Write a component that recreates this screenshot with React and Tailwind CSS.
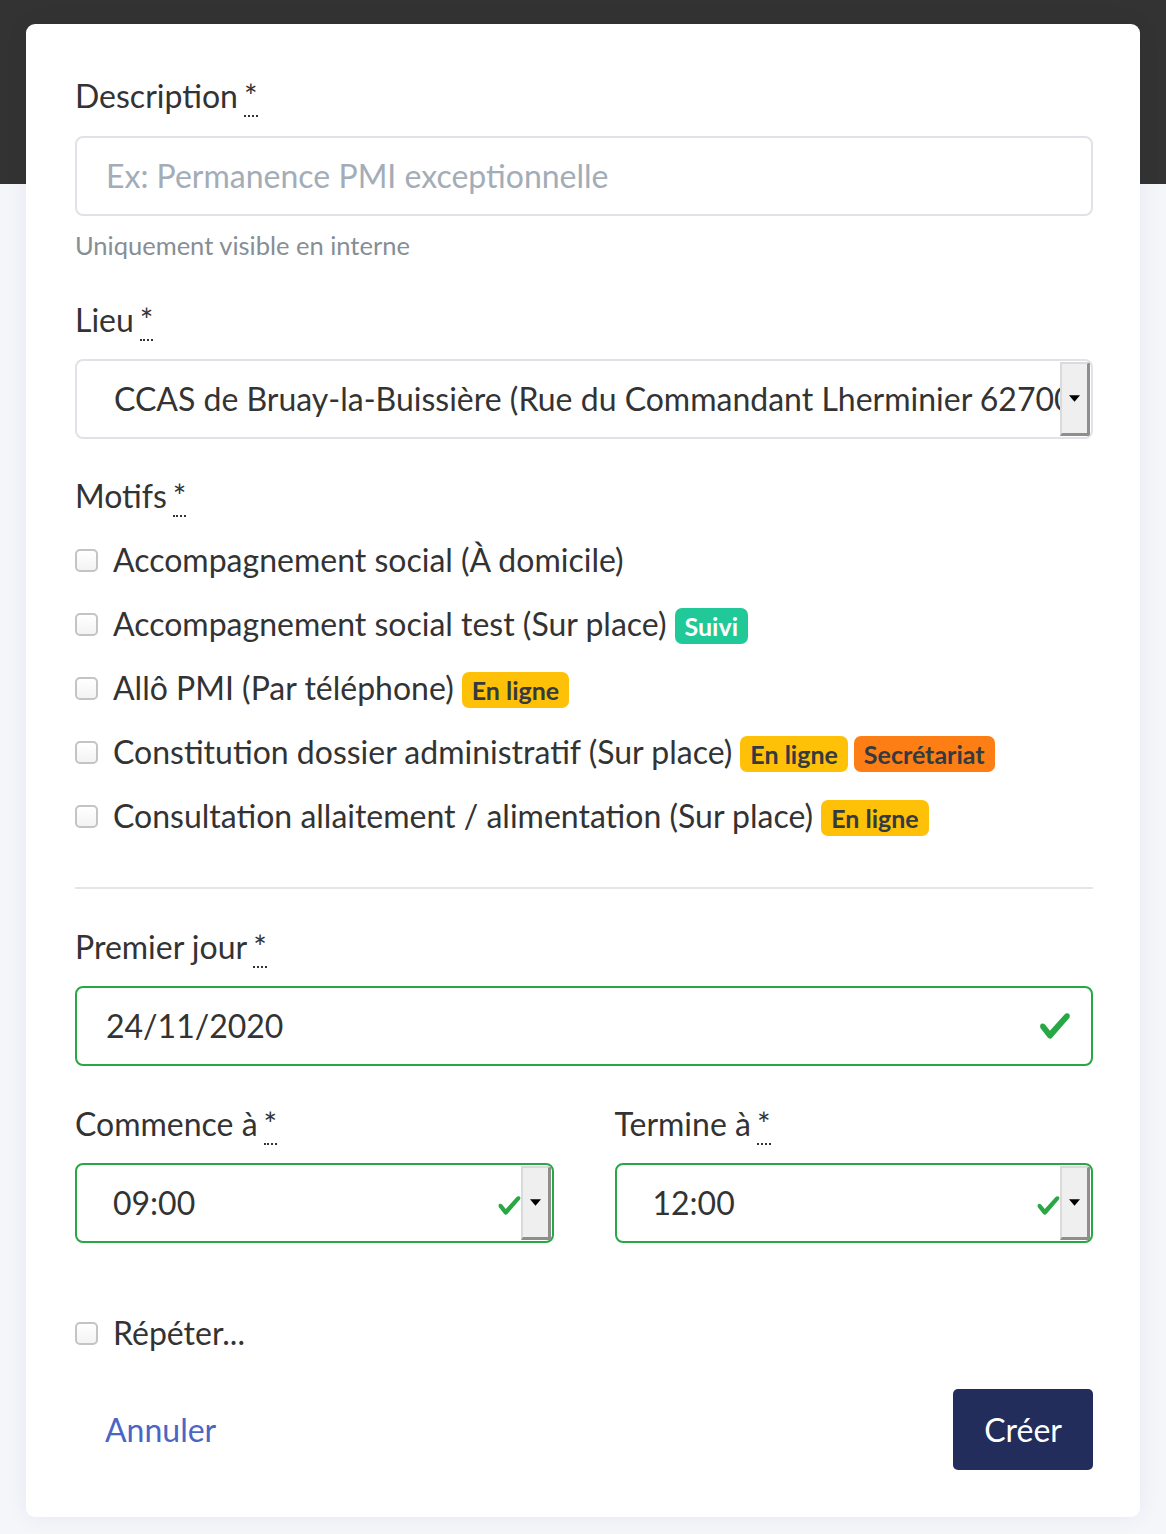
import React from 'react';

const Required = () => (
    <abbr className="ml-[6px] no-underline border-b-2 border-dotted border-[#333] leading-none" title="obligatoire">*</abbr>
);

const Label = ({ children, className = '' }) => (
    <label className={`block text-[32px] leading-[36px] text-[#333] ${className}`}>
        {children}
        <Required />
    </label>
);

const Check = ({ className = '' }) => (
    <svg viewBox="0 0 8 8" className={className}>
        <path fill="#28a745" d="M2.3 6.73L.6 4.53c-.4-1.04.46-1.4 1.1-.8l1.1 1.4 3.4-3.8c.6-.63 1.6-.27 1.2.7l-4 4.6c-.43.5-.8.4-1.1.1z" />
    </svg>
);

const Spinner = () => (
    <div className="h-full w-[30px] bg-[#efefef] border-l-2 border-t-2 border-l-[#dadada] border-t-[#dadada] border-r-[3px] border-b-[3px] border-r-[#8e8e8e] border-b-[#8e8e8e] flex items-center justify-center">
        <svg viewBox="0 0 10 6" className="w-[11px] h-[7px]">
            <path d="M0 0h10L5 6z" fill="#000" />
        </svg>
    </div>
);

const Checkbox = () => (
    <span className="w-[23px] h-[23px] shrink-0 rounded-[5px] border-2 border-[#c4c4c4] bg-gradient-to-b from-white to-[#f3f3f3]"></span>
);

const badgeStyles = {
    suivi: 'bg-[#20c997] text-white',
    ligne: 'bg-[#ffc107] text-[#343a40]',
    secretariat: 'bg-[#fd7e14] text-[#343a40]',
};

const Badge = ({ kind, children }) => (
    <span className={`inline-flex items-center h-[36px] px-[10px] rounded-[7px] text-[25px] font-bold leading-none ${badgeStyles[kind]}`}>
        {children}
    </span>
);

const motifs = [
    { label: 'Accompagnement social (À domicile)', badges: [] },
    { label: 'Accompagnement social test (Sur place)', badges: [['suivi', 'Suivi']] },
    { label: 'Allô PMI (Par téléphone)', badges: [['ligne', 'En ligne']] },
    { label: 'Constitution dossier administratif (Sur place)', badges: [['ligne', 'En ligne'], ['secretariat', 'Secrétariat']] },
    { label: 'Consultation allaitement / alimentation (Sur place)', badges: [['ligne', 'En ligne']] },
];

const TimeInput = ({ value }) => (
    <div className="h-[80px] rounded-[8px] border-2 border-[#28a745] flex items-center pl-[36px] pr-[1px] overflow-hidden">
        <span className="flex-1 text-[32px] text-[#333]">{value}</span>
        <Check className="w-[25px] h-[25px] -mr-[1px] relative top-[2px]" />
        <div className="h-[76px] py-[1px]"><Spinner /></div>
    </div>
);

export default function App() {
    return (
        <div
            className="min-h-[1534px] bg-[linear-gradient(#333_184px,#f4f6fa_184px)] px-[26px] pt-[24px] pb-[18px]"
            style={{ fontFamily: 'Lato, "Open Sans", sans-serif' }}
        >
            <div className="bg-white rounded-[9px] shadow-[0_0_24px_rgba(30,40,80,0.06)] pl-[49px] pr-[47px] pt-[54px] pb-[47px]">
                <Label className="mb-[22px]">Description</Label>
                <div className="h-[80px] rounded-[8px] border-2 border-[#dfe3e8] flex items-center px-[29px]">
                    <span className="text-[32px] text-[#a3adb7]">Ex: Permanence PMI exceptionnelle</span>
                </div>
                <p className="mt-[14px] text-[25.5px] leading-[30px] text-[#868e96]">Uniquement visible en interne</p>

                <Label className="mt-[42px] mb-[21px]">Lieu</Label>
                <div className="h-[80px] rounded-[8px] border-2 border-[#dfe3e8] flex items-center pl-[37px] pr-[1px] overflow-hidden">
                    <span className="flex-1 min-w-0 overflow-hidden whitespace-nowrap text-[32px] text-[#333]">
                        CCAS de Bruay-la-Buissière (Rue du Commandant Lherminier 62700
                    </span>
                    <div className="h-[76px] py-[1px]"><Spinner /></div>
                </div>

                <Label className="mt-[39px]">Motifs</Label>
                <div className="mt-[14px] flex flex-col">
                    {motifs.map((m) => (
                        <div key={m.label} className="h-[64px] flex items-center">
                            <Checkbox />
                            <span className="ml-[15px] text-[32px] text-[#333]">{m.label}</span>
                            <span className="flex gap-[6px] ml-[8px] mt-[4px]">
                                {m.badges.map(([k, t]) => (
                                    <Badge key={t} kind={k}>{t}</Badge>
                                ))}
                            </span>
                        </div>
                    ))}
                </div>

                <hr className="mt-[39px] border-0 h-[2px] bg-[#e6e6e6]" />

                <Label className="mt-[40px] mb-[21px]">Premier jour</Label>
                <div className="h-[80px] rounded-[8px] border-2 border-[#28a745] flex items-center pl-[29px] pr-[19px]">
                    <span className="flex-1 text-[32px] text-[#333]">24/11/2020</span>
                    <Check className="w-[34px] h-[34px]" />
                </div>

                <div className="mt-[40px] grid grid-cols-2 gap-x-[61px]">
                    <div>
                        <Label className="mb-[21px]">Commence à</Label>
                        <TimeInput value="09:00" />
                    </div>
                    <div>
                        <Label className="mb-[21px]">Termine à</Label>
                        <TimeInput value="12:00" />
                    </div>
                </div>

                <div className="mt-[58px] h-[64px] flex items-center">
                    <Checkbox />
                    <span className="ml-[15px] text-[32px] text-[#333]">Répéter...</span>
                </div>

                <div className="mt-[24px] flex items-center justify-between">
                    <a className="ml-[30px] text-[32px] text-[#4a66c4]" href="#">Annuler</a>
                    <button className="h-[81px] px-[31px] rounded-[5px] bg-[#222d5c] text-white text-[32px]">Créer</button>
                </div>
            </div>
        </div>
    );
}
